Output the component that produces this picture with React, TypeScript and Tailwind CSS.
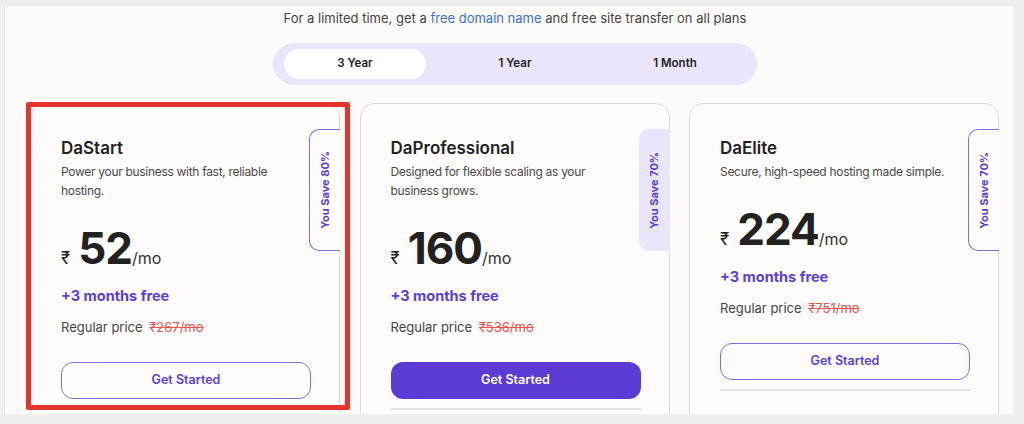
import React from 'react'

type Plan = {
  name: string
  desc: string
  price: string
  regular: string
  save: string
  featured?: boolean
}

const plans: Plan[] = [
  { name: 'DaStart', desc: 'Power your business with fast, reliable hosting.', price: '52', regular: '₹267/mo', save: 'You Save 80%' },
  { name: 'DaProfessional', desc: 'Designed for flexible scaling as your business grows.', price: '160', regular: '₹536/mo', save: 'You Save 70%', featured: true },
  { name: 'DaElite', desc: 'Secure, high-speed hosting made simple.', price: '224', regular: '₹751/mo', save: 'You Save 70%' },
]

const tabs = ['3 Year', '1 Year', '1 Month']

function PlanCard({ plan }: { plan: Plan }) {
  return (
    <div className="relative w-[310px] h-[330px] shrink-0 rounded-[14px] border border-[#dcdbd9] bg-[#fdfcfb] pl-[30px] pr-[30px] pt-[33px]">
      {/* side badge */}
      <div
        className={`absolute right-[-1px] top-[25px] w-[31px] h-[122px] rounded-l-[10px] flex items-center justify-center ${
          plan.featured ? 'bg-[#e9e6fc]' : 'border border-r-0 border-[#7e6fe3] bg-[#fdfcfb]'
        }`}
      >
        <span className="[writing-mode:vertical-rl] rotate-180 text-[11px] font-bold text-[#5a3fd6] whitespace-nowrap">
          {plan.save}
        </span>
      </div>

      <h3 className="text-[17px] leading-[22px] font-semibold text-[#222]">{plan.name}</h3>
      <p className="mt-[3px] max-w-[240px] text-[12px] tracking-[-0.3px] leading-[19px] text-[#4a4a4a]">{plan.desc}</p>

      <div className="mt-[26px] flex items-baseline text-[#222]">
        <span className="text-[17px] mr-[8px]">₹</span>
        <span className="text-[44px] leading-[44px] font-bold tracking-[-1px]">{plan.price}</span>
        <span className="text-[16px] text-[#333]">/mo</span>
      </div>

      <div className="mt-[14px] text-[14.5px] leading-[20px] font-bold text-[#5a3fd6]">+3 months free</div>

      <div className="mt-[12px] text-[13px] leading-[18px] text-[#444]">
        Regular price <span className="ml-[3px] text-[#e8554e] line-through">{plan.regular}</span>
      </div>

      <button
        className={`mt-[26px] w-[250px] h-[37px] rounded-[12px] text-[12.5px] font-semibold ${
          plan.featured
            ? 'bg-[#5a3bd6] text-white'
            : 'border-[1.5px] border-[#7e6fe3] text-[#5a3fd6] bg-transparent'
        }`}
      >
        Get Started
      </button>

      <div className="mt-[9px] h-[2px] w-[250px] bg-[#e2e1df]" />
    </div>
  )
}

export default function App() {
  return (
    <div className="relative w-[1024px] h-[424px] overflow-hidden bg-[#efefef] pl-[4px] pt-[5px] font-['Inter',sans-serif]">
      <div className="w-[1009px] h-[409px] overflow-hidden bg-[#fcfbfa] border-l border-t border-[#e6e6e6]">
        <div className="ml-[25px] w-[970px] flex flex-col items-center">
          <p className="mt-[3px] text-[13px] leading-[18px] text-[#444]">
            For a limited time, get a <span className="text-[#3b6fe0]">free domain name</span> and free site transfer on all plans
          </p>

          <div className="mt-[16px] w-[484px] h-[42px] rounded-full bg-[#e9e6fc] px-[2px] py-[6px] grid grid-cols-3">
            {tabs.map((t, i) => (
              <div
                key={t}
                className={`flex items-center justify-center text-[11.5px] font-semibold text-[#222] rounded-full ${
                  i === 0 ? 'bg-white mx-[9px]' : ''
                }`}
              >
                {t}
              </div>
            ))}
          </div>

          <div className="mt-[18px] w-full flex gap-[19.5px]">
            {plans.map((p) => (
              <PlanCard key={p.name} plan={p} />
            ))}
          </div>
        </div>
      </div>

      {/* red highlight */}
      <div className="absolute left-[26px] top-[102px] w-[324px] h-[308px] border-[5px] border-[#e5342a] rounded-[2px] pointer-events-none" />
    </div>
  )
}
